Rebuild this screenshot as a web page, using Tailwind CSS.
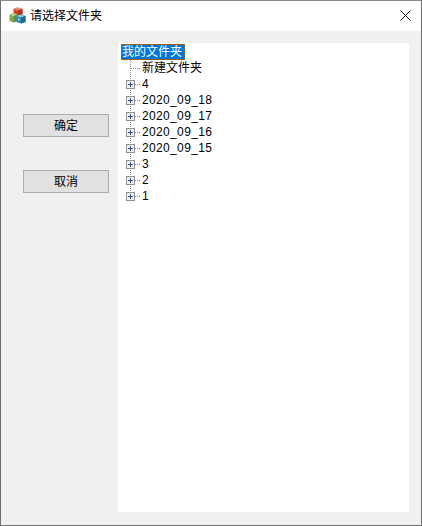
<!DOCTYPE html>
<html lang="zh-CN">
  <head>
    <meta charset="UTF-8" />
    <title>请选择文件夹</title>
    <script src="https://cdn.jsdelivr.net/npm/@tailwindcss/browser@4"></script>
  </head>
  <body class="w-[422px] h-[526px] overflow-hidden bg-[#f0f0f0] font-['Liberation_Sans','Noto_Sans_CJK_SC',sans-serif] text-[12px] text-black">
    <div class="w-[422px] h-[526px] border border-t-[#8a8a8a] border-x-[#6e6e6e] border-b-[#6e6e6e] flex flex-col">
      <!-- Title bar -->
      <header class="h-[30px] bg-white flex items-center shrink-0">
        <svg class="ml-[8px] -mt-[1px] w-[17px] h-[17px]" viewBox="0 0 17 17">
          <!-- red cube -->
          <path d="M8.5 0.5L13.5 2V7.5L8.5 9L4.5 7.5V2Z" fill="#d8402c" />
          <path d="M4.5 2L8.5 0.5L13.5 2L9 3.5Z" fill="#ee8a70" />
          <path d="M9 3.5L13.5 2V7.5L9 9Z" fill="#b53222" />
          <!-- green cube -->
          <path d="M0.5 7.5L4 6L8.5 7.5V14L4.5 15.5L0.5 14Z" fill="#7fae4e" />
          <path d="M0.5 7.5L4 6L8 7.5L4.5 9Z" fill="#bcd893" />
          <path d="M4.5 9L8.5 7.5V14L4.5 15.5Z" fill="#5f9140" />
          <!-- blue cube -->
          <path d="M7.5 9L12 7.5L16.5 9V15L12 16.5L7.5 15Z" fill="#2f86b8" />
          <path d="M7.5 9L12 7.5L16.5 9L12 10.5Z" fill="#8cc6e2" />
          <path d="M12 10.5L16.5 9V15L12 16.5Z" fill="#1f6796" />
          <rect x="9" y="11.5" width="1.5" height="2" fill="#a8d6ec" />
        </svg>
        <span class="ml-[4px] -mt-[1px]">请选择文件夹</span>
        <svg class="ml-auto mr-[10px] -mt-[2px] w-[11px] h-[11px]" viewBox="0 0 11 11">
          <path d="M0.5 0.5L10.5 10.5M10.5 0.5L0.5 10.5" stroke="#111" stroke-width="1" fill="none" />
        </svg>
      </header>

      <main class="flex flex-1 pt-[12px] pb-[13px] pr-[12px]">
        <!-- Buttons -->
        <div class="w-[117px] shrink-0 flex flex-col gap-[33px] pt-[71px] pl-[22px]">
          <button class="w-[86px] h-[23px] bg-[#e1e1e1] border border-[#adadad] text-[12px]">确定</button>
          <button class="w-[86px] h-[23px] bg-[#e1e1e1] border border-[#adadad] text-[12px]">取消</button>
        </div>

        <!-- Tree -->
        <div class="flex-1 bg-white pt-[1px] pl-[3px]">
          <div class="h-[16px] flex items-center">
            <span class="h-[16px] leading-[17px] pl-[1px] pr-[3px] bg-[#0078d7] text-white outline-1 outline-dotted outline-[#a8661c] -outline-offset-1">我的文件夹</span>
          </div>
          <div class="h-[16px] flex items-center">
            <svg class="w-[20px] h-[16px] shrink-0" viewBox="0 0 20 16"><path d="M9.5 0V16M10 8.5H19" stroke="#888" stroke-dasharray="1 1" fill="none" /></svg>
            <span class="ml-[1px]">新建文件夹</span>
          </div>
          <div class="h-[16px] flex items-center">
            <svg class="w-[20px] h-[16px] shrink-0" viewBox="0 0 20 16"><path d="M9.5 0V16M10 8.5H19" stroke="#888" stroke-dasharray="1 1" fill="none" /><rect x="5.5" y="4.5" width="8" height="8" fill="#f0f0f0" stroke="#919191" /><path d="M7 8.5H12M9.5 6V11" stroke="#34508a" fill="none" /></svg>
            <span class="ml-[1px] tracking-[0.35px]">4</span>
          </div>
          <div class="h-[16px] flex items-center">
            <svg class="w-[20px] h-[16px] shrink-0" viewBox="0 0 20 16"><path d="M9.5 0V16M10 8.5H19" stroke="#888" stroke-dasharray="1 1" fill="none" /><rect x="5.5" y="4.5" width="8" height="8" fill="#f0f0f0" stroke="#919191" /><path d="M7 8.5H12M9.5 6V11" stroke="#34508a" fill="none" /></svg>
            <span class="ml-[1px] tracking-[0.35px]">2020_09_18</span>
          </div>
          <div class="h-[16px] flex items-center">
            <svg class="w-[20px] h-[16px] shrink-0" viewBox="0 0 20 16"><path d="M9.5 0V16M10 8.5H19" stroke="#888" stroke-dasharray="1 1" fill="none" /><rect x="5.5" y="4.5" width="8" height="8" fill="#f0f0f0" stroke="#919191" /><path d="M7 8.5H12M9.5 6V11" stroke="#34508a" fill="none" /></svg>
            <span class="ml-[1px] tracking-[0.35px]">2020_09_17</span>
          </div>
          <div class="h-[16px] flex items-center">
            <svg class="w-[20px] h-[16px] shrink-0" viewBox="0 0 20 16"><path d="M9.5 0V16M10 8.5H19" stroke="#888" stroke-dasharray="1 1" fill="none" /><rect x="5.5" y="4.5" width="8" height="8" fill="#f0f0f0" stroke="#919191" /><path d="M7 8.5H12M9.5 6V11" stroke="#34508a" fill="none" /></svg>
            <span class="ml-[1px] tracking-[0.35px]">2020_09_16</span>
          </div>
          <div class="h-[16px] flex items-center">
            <svg class="w-[20px] h-[16px] shrink-0" viewBox="0 0 20 16"><path d="M9.5 0V16M10 8.5H19" stroke="#888" stroke-dasharray="1 1" fill="none" /><rect x="5.5" y="4.5" width="8" height="8" fill="#f0f0f0" stroke="#919191" /><path d="M7 8.5H12M9.5 6V11" stroke="#34508a" fill="none" /></svg>
            <span class="ml-[1px] tracking-[0.35px]">2020_09_15</span>
          </div>
          <div class="h-[16px] flex items-center">
            <svg class="w-[20px] h-[16px] shrink-0" viewBox="0 0 20 16"><path d="M9.5 0V16M10 8.5H19" stroke="#888" stroke-dasharray="1 1" fill="none" /><rect x="5.5" y="4.5" width="8" height="8" fill="#f0f0f0" stroke="#919191" /><path d="M7 8.5H12M9.5 6V11" stroke="#34508a" fill="none" /></svg>
            <span class="ml-[1px] tracking-[0.35px]">3</span>
          </div>
          <div class="h-[16px] flex items-center">
            <svg class="w-[20px] h-[16px] shrink-0" viewBox="0 0 20 16"><path d="M9.5 0V16M10 8.5H19" stroke="#888" stroke-dasharray="1 1" fill="none" /><rect x="5.5" y="4.5" width="8" height="8" fill="#f0f0f0" stroke="#919191" /><path d="M7 8.5H12M9.5 6V11" stroke="#34508a" fill="none" /></svg>
            <span class="ml-[1px] tracking-[0.35px]">2</span>
          </div>
          <div class="h-[16px] flex items-center">
            <svg class="w-[20px] h-[16px] shrink-0" viewBox="0 0 20 16"><path d="M9.5 0V4M10 8.5H19" stroke="#888" stroke-dasharray="1 1" fill="none" /><rect x="5.5" y="4.5" width="8" height="8" fill="#f0f0f0" stroke="#919191" /><path d="M7 8.5H12M9.5 6V11" stroke="#34508a" fill="none" /></svg>
            <span class="ml-[1px] tracking-[0.35px]">1</span>
          </div>
        </div>
      </main>
    </div>
  </body>
</html>
